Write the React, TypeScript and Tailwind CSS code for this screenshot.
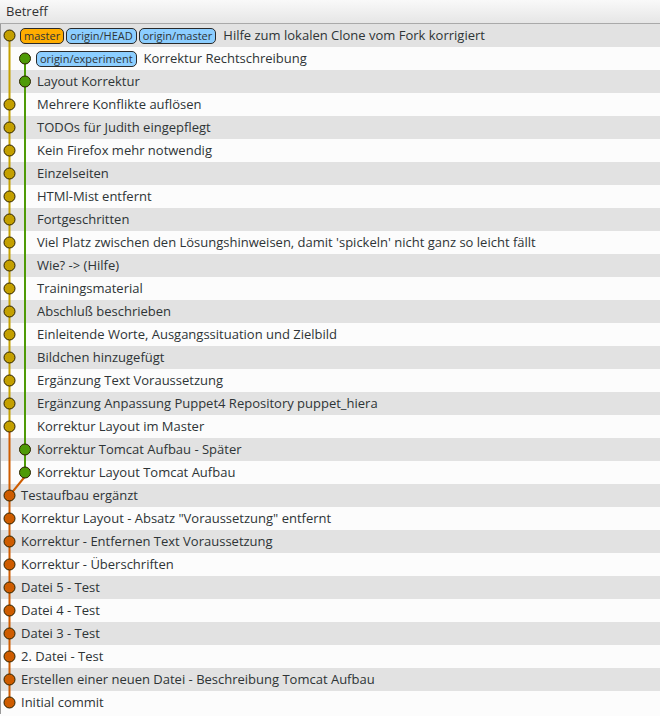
import React from 'react';

type Commit = {
  msg: string;
  lane: 0 | 1;
  color: 'y' | 'g' | 'o';
  width: number; // how many lanes this row spans
  labels?: { text: string; kind: 'local' | 'remote' }[];
};

const commits: Commit[] = [
  {
    msg: 'Hilfe zum lokalen Clone vom Fork korrigiert',
    lane: 0,
    color: 'y',
    width: 1,
    labels: [
      { text: 'master', kind: 'local' },
      { text: 'origin/HEAD', kind: 'remote' },
      { text: 'origin/master', kind: 'remote' },
    ],
  },
  { msg: 'Korrektur Rechtschreibung', lane: 1, color: 'g', width: 2, labels: [{ text: 'origin/experiment', kind: 'remote' }] },
  { msg: 'Layout Korrektur', lane: 1, color: 'g', width: 2 },
  { msg: 'Mehrere Konflikte auflösen', lane: 0, color: 'y', width: 2 },
  { msg: 'TODOs für Judith eingepflegt', lane: 0, color: 'y', width: 2 },
  { msg: 'Kein Firefox mehr notwendig', lane: 0, color: 'y', width: 2 },
  { msg: 'Einzelseiten', lane: 0, color: 'y', width: 2 },
  { msg: 'HTMl-Mist entfernt', lane: 0, color: 'y', width: 2 },
  { msg: 'Fortgeschritten', lane: 0, color: 'y', width: 2 },
  { msg: "Viel Platz zwischen den Lösungshinweisen, damit 'spickeln' nicht ganz so leicht fällt", lane: 0, color: 'y', width: 2 },
  { msg: 'Wie? -> (Hilfe)', lane: 0, color: 'y', width: 2 },
  { msg: 'Trainingsmaterial', lane: 0, color: 'y', width: 2 },
  { msg: 'Abschluß beschrieben', lane: 0, color: 'y', width: 2 },
  { msg: 'Einleitende Worte, Ausgangssituation und Zielbild', lane: 0, color: 'y', width: 2 },
  { msg: 'Bildchen hinzugefügt', lane: 0, color: 'y', width: 2 },
  { msg: 'Ergänzung Text Voraussetzung', lane: 0, color: 'y', width: 2 },
  { msg: 'Ergänzung Anpassung Puppet4 Repository puppet_hiera', lane: 0, color: 'y', width: 2 },
  { msg: 'Korrektur Layout im Master', lane: 0, color: 'y', width: 2 },
  { msg: 'Korrektur Tomcat Aufbau - Später', lane: 1, color: 'g', width: 2 },
  { msg: 'Korrektur Layout Tomcat Aufbau', lane: 1, color: 'g', width: 2 },
  { msg: 'Testaufbau ergänzt', lane: 0, color: 'o', width: 1 },
  { msg: 'Korrektur Layout - Absatz "Voraussetzung" entfernt', lane: 0, color: 'o', width: 1 },
  { msg: 'Korrektur - Entfernen Text Voraussetzung', lane: 0, color: 'o', width: 1 },
  { msg: 'Korrektur - Überschriften', lane: 0, color: 'o', width: 1 },
  { msg: 'Datei 5 - Test', lane: 0, color: 'o', width: 1 },
  { msg: 'Datei 4 - Test', lane: 0, color: 'o', width: 1 },
  { msg: 'Datei 3 - Test', lane: 0, color: 'o', width: 1 },
  { msg: '2. Datei - Test', lane: 0, color: 'o', width: 1 },
  { msg: 'Erstellen einer neuen Datei - Beschreibung Tomcat Aufbau', lane: 0, color: 'o', width: 1 },
  { msg: 'Initial commit', lane: 0, color: 'o', width: 1 },
];

const ROW = 23;
const laneX = [8.5, 24];
const fill = { y: '#c4a000', g: '#4e9a06', o: '#ce5c00' };
const cy = (i: number) => i * ROW + 11.5;

const Graph: React.FC = () => {
  const h = commits.length * ROW;
  return (
    <svg className="absolute left-0 top-0 pointer-events-none" width={40} height={h}>
      {/* Linien */}
      <line x1={laneX[0]} y1={cy(0)} x2={laneX[0]} y2={cy(17)} stroke={fill.y} strokeWidth={2} />
      <line x1={laneX[1]} y1={cy(1)} x2={laneX[1]} y2={cy(19)} stroke={fill.g} strokeWidth={2} />
      <line x1={laneX[0]} y1={cy(17)} x2={laneX[0]} y2={cy(29)} stroke={fill.o} strokeWidth={2} />
      <line x1={laneX[1]} y1={cy(19) + 4} x2={laneX[0]} y2={cy(20)} stroke={fill.o} strokeWidth={2} />
      {/* Punkte */}
      {commits.map((c, i) => (
        <circle key={i} cx={laneX[c.lane]} cy={cy(i)} r={5.5} fill={fill[c.color]} stroke="#2b2200" strokeWidth={1} />
      ))}
    </svg>
  );
};

const App: React.FC = () => {
  return (
    <div
      className="w-[660px] h-[716px] bg-[#fcfcfc] text-[13px] text-[#2e3436] overflow-hidden"
      style={{ fontFamily: '"Open Sans", "Noto Sans", sans-serif' }}
    >
      <div className="h-[24px] border-b border-[#a9a9a9] bg-gradient-to-b from-[#f9f9f9] to-[#e6e6e6] pl-[6px] flex items-center text-[#333]">
        Betreff
      </div>
      <div className="relative border-l border-[#9a9a9a]">
        <Graph />
        {commits.map((c, i) => (
          <div
            key={i}
            className={`h-[23px] flex items-center whitespace-nowrap ${i % 2 === 0 ? 'bg-[#e2e2e2]' : 'bg-[#fcfcfc]'} ${
              c.width === 2 ? 'pl-[36px]' : 'pl-[20px]'
            }`}
          >
            {c.labels && (
              <div className="flex gap-[2px] mr-[7px] -ml-[1px]">
                {c.labels.map((l) => (
                  <span
                    key={l.text}
                    className={`h-[16px] px-[3px] flex items-center rounded-[5px] border border-[#2a2a2a] text-[11px] leading-none ${
                      l.kind === 'local' ? 'bg-[#ffad00]' : 'bg-[#8cceff]'
                    }`}
                  >
                    {l.text}
                  </span>
                ))}
              </div>
            )}
            <span>{c.msg}</span>
          </div>
        ))}
      </div>
    </div>
  );
};

export default App;
